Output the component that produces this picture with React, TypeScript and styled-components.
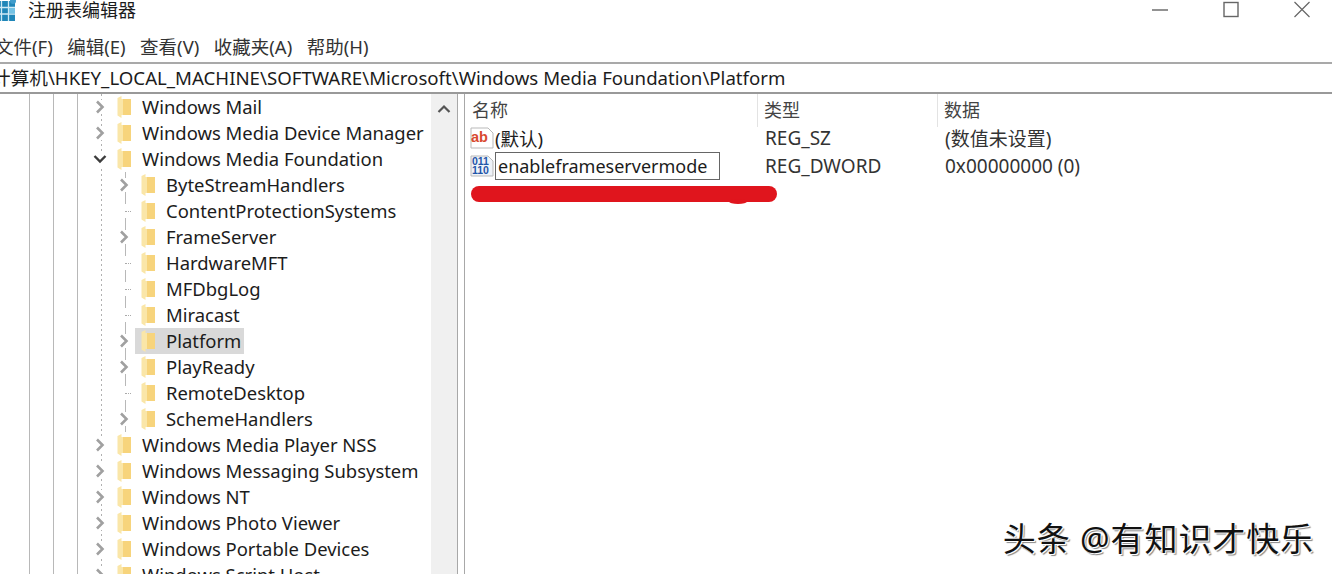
import React from "react";
import styled, { createGlobalStyle } from "styled-components";

interface TreeItem {
    label: string;
    depth: 0 | 1;
    arrow?: "closed" | "open";
    selected?: boolean;
}

const treeItems: TreeItem[] = [
    { label: "Windows Mail", depth: 0, arrow: "closed" },
    { label: "Windows Media Device Manager", depth: 0, arrow: "closed" },
    { label: "Windows Media Foundation", depth: 0, arrow: "open" },
    { label: "ByteStreamHandlers", depth: 1, arrow: "closed" },
    { label: "ContentProtectionSystems", depth: 1 },
    { label: "FrameServer", depth: 1, arrow: "closed" },
    { label: "HardwareMFT", depth: 1 },
    { label: "MFDbgLog", depth: 1 },
    { label: "Miracast", depth: 1 },
    { label: "Platform", depth: 1, arrow: "closed", selected: true },
    { label: "PlayReady", depth: 1, arrow: "closed" },
    { label: "RemoteDesktop", depth: 1 },
    { label: "SchemeHandlers", depth: 1, arrow: "closed" },
    { label: "Windows Media Player NSS", depth: 0, arrow: "closed" },
    { label: "Windows Messaging Subsystem", depth: 0, arrow: "closed" },
    { label: "Windows NT", depth: 0, arrow: "closed" },
    { label: "Windows Photo Viewer", depth: 0, arrow: "closed" },
    { label: "Windows Portable Devices", depth: 0, arrow: "closed" },
    { label: "Windows Script Host", depth: 0, arrow: "closed" },
];

const menus = ["文件(F)", "编辑(E)", "查看(V)", "收藏夹(A)", "帮助(H)"];

const RegeditIcon = () => (
    <svg width="26" height="24" viewBox="0 0 26 24">
        <rect x="0" y="3" width="20" height="20" fill="#1f86b8" />
        <path d="M0 9.5h20M0 16h20M6.5 3v20M13.5 3v20" stroke="#cfeaf5" strokeWidth="1.3" />
        <rect x="14" y="10" width="6" height="5.5" fill="#74c2e4" />
        <circle cx="18" cy="3" r="3" fill="#3f9ccb" />
    </svg>
);

const FolderIcon = () => (
    <svg width="15" height="24" viewBox="0 0 15 24">
        <path d="M0.5 3L4.5 1V4H14V20H4.5V23L0.5 20.5Z" fill="#fae6a8" />
        <path d="M6 4H14V20H6Z" fill="#f7d47c" />
    </svg>
);

const Chevron = ({ open }: { open: boolean }) => (
    <svg width="14" height="14" viewBox="0 0 14 14">
        {open ? (
            <path d="M1.5 4L7 9.5L12.5 4" fill="none" stroke="#3c3c3c" strokeWidth="2.4" />
        ) : (
            <path d="M4 1.5L9.5 7L4 12.5" fill="none" stroke="#a0a0a0" strokeWidth="2.6" />
        )}
    </svg>
);

const StringIcon = () => (
    <svg width="24" height="24" viewBox="0 0 24 24">
        <path d="M1 2H18L23 7V22H1Z" fill="#fff" stroke="#b9b9b9" />
        <text x="1" y="16" fontFamily="Liberation Sans, sans-serif" fontWeight="700" fontSize="14.5" fill="#d8492f">
            ab
        </text>
    </svg>
);

const BinaryIcon = () => (
    <svg width="24" height="24" viewBox="0 0 24 24">
        <path d="M1 2H18L23 7V22H1Z" fill="#eef2f8" stroke="#b9b9b9" />
        <text x="2" y="10.5" fontFamily="Liberation Sans, sans-serif" fontWeight="700" fontSize="10.5" fill="#1f55a8">
            011
        </text>
        <text x="2" y="20" fontFamily="Liberation Sans, sans-serif" fontWeight="700" fontSize="10.5" fill="#1f55a8">
            110
        </text>
    </svg>
);

const App: React.FC = () => (
    <Window>
        <GlobalStyle />
        <TitleBar>
            <TitleGroup>
                <RegeditIcon />
                <TitleText>注册表编辑器</TitleText>
            </TitleGroup>
            <Controls>
                <svg width="20" height="20" viewBox="0 0 20 20">
                    <path d="M2 10H18" stroke="#777" strokeWidth="1.6" />
                </svg>
                <svg width="20" height="20" viewBox="0 0 20 20">
                    <rect x="3" y="2.5" width="14" height="14" fill="none" stroke="#666" strokeWidth="1.4" />
                </svg>
                <svg width="20" height="20" viewBox="0 0 20 20">
                    <path d="M2.5 2L17.5 17M17.5 2L2.5 17" stroke="#666" strokeWidth="1.2" />
                </svg>
            </Controls>
        </TitleBar>
        <MenuBar>
            {menus.map((menu) => (
                <MenuItem key={menu}>{menu}</MenuItem>
            ))}
        </MenuBar>
        <AddressBar>
            <AddressText>计算机\HKEY_LOCAL_MACHINE\SOFTWARE\Microsoft\Windows Media Foundation\Platform</AddressText>
        </AddressBar>
        <Content>
            <TreePane>
                {treeItems.map((item) => (
                    <TreeRow key={item.label} $depth={item.depth}>
                        <ArrowSlot>
                            {item.arrow ? <Chevron open={item.arrow === "open"} /> : item.depth === 1 && <Dots />}
                        </ArrowSlot>
                        <TreeLabelWrap $selected={item.selected}>
                            <FolderIcon />
                            <TreeLabel>{item.label}</TreeLabel>
                        </TreeLabelWrap>
                    </TreeRow>
                ))}
            </TreePane>
            <ScrollBar>
                <svg width="14" height="10" viewBox="0 0 14 10">
                    <path d="M1.5 8L7 2.5L12.5 8" fill="none" stroke="#555" strokeWidth="2.2" />
                </svg>
            </ScrollBar>
            <Splitter />
            <ListPane>
                <HeaderRow>
                    <HeaderCell>名称</HeaderCell>
                    <HeaderCell $divided>类型</HeaderCell>
                    <HeaderCell $divided>数据</HeaderCell>
                </HeaderRow>
                <ValueRow>
                    <NameCell>
                        <StringIcon />
                        <span>(默认)</span>
                    </NameCell>
                    <PlainCell>REG_SZ</PlainCell>
                    <PlainCell>(数值未设置)</PlainCell>
                </ValueRow>
                <ValueRow>
                    <NameCell>
                        <BinaryIcon />
                        <EditBox>enableframeservermode</EditBox>
                    </NameCell>
                    <PlainCell>REG_DWORD</PlainCell>
                    <PlainCell>0x00000000 (0)</PlainCell>
                </ValueRow>
                <RedMark />
            </ListPane>
        </Content>
        <Watermark>头条 @有知识才快乐</Watermark>
    </Window>
);

export default App;

// Styled Components
const GlobalStyle = createGlobalStyle`
    html, body {
        margin: 0;
        padding: 0;
        height: 100%;
        overflow: hidden;
        background: #fff;
    }
`;

const Window = styled.div`
    position: relative;
    width: 1332px;
    height: 574px;
    overflow: hidden;
    background: #fff;
    color: #1c1c1c;
    font-family: "Noto Sans", "Noto Sans CJK SC", sans-serif;
    font-size: 18.5px;
    display: flex;
    flex-direction: column;
`;

const TitleBar = styled.div`
    height: 20px;
    display: flex;
    justify-content: space-between;
    align-items: center;
    flex-shrink: 0;
`;

const TitleGroup = styled.div`
    display: flex;
    align-items: center;
    gap: 7px;
    margin-left: -5px;
`;

const TitleText = styled.span`
    font-size: 18px;
    line-height: 20px;
`;

const Controls = styled.div`
    display: flex;
    gap: 51px;
    margin-right: 20px;
`;

const MenuBar = styled.div`
    height: 42px;
    display: flex;
    align-items: center;
    gap: 14.5px;
    margin-left: -5px;
    padding-top: 12px;
    box-sizing: border-box;
    flex-shrink: 0;
`;

const MenuItem = styled.span`
    font-size: 18.5px;
    line-height: 24px;
    color: #333;
`;

const AddressBar = styled.div`
    height: 32px;
    box-sizing: border-box;
    border-top: 2px solid #a9a9a9;
    border-bottom: 2px solid #999;
    padding-bottom: 4px;
    display: flex;
    align-items: center;
    overflow: hidden;
    flex-shrink: 0;
`;

const AddressText = styled.span`
    margin-left: -8px;
    font-size: 18.65px;
    white-space: nowrap;
`;

const Content = styled.div`
    flex: 1;
    display: flex;
    min-height: 0;
`;

const TreePane = styled.div`
    width: 431px;
    flex-shrink: 0;
    overflow: hidden;
    background-image:
        linear-gradient(#b8b8b8, #b8b8b8),
        linear-gradient(#b8b8b8, #b8b8b8),
        linear-gradient(#b8b8b8, #b8b8b8),
        repeating-linear-gradient(#b0b0b0 0 2px, transparent 2px 5px);
    background-size: 1px 100%;
    background-repeat: no-repeat;
    background-position: 29px 0, 53px 0, 77px 0, 101px 0;
`;

const TreeRow = styled.div<{ $depth: number }>`
    height: 26px;
    display: flex;
    align-items: center;
    padding-left: ${({ $depth }) => 93 + $depth * 24}px;
    background: ${({ $depth }) =>
        $depth === 1 ? "linear-gradient(#b8b8b8, #b8b8b8) 125px 0 / 1px 100% no-repeat" : "none"};
`;

const ArrowSlot = styled.span`
    width: 14px;
    height: 14px;
    display: flex;
    align-items: center;
    justify-content: center;
    background: #fff;
    flex-shrink: 0;
`;

const Dots = styled.span`
    width: 10px;
    margin-left: 8px;
    border-top: 1px dotted #aaa;
`;

const TreeLabelWrap = styled.span<{ $selected?: boolean }>`
    height: 26px;
    display: flex;
    align-items: center;
    gap: 10px;
    margin-left: 10px;
    padding-right: ${({ $selected }) => ($selected ? "3px" : "0")};
    box-shadow: ${({ $selected }) => ($selected ? "-6px 0 0 #d9d9d9" : "none")};
    background: ${({ $selected }) => ($selected ? "#d9d9d9" : "transparent")};
`;

const TreeLabel = styled.span`
    white-space: nowrap;
    font-size: 18.45px;
    line-height: 26px;
`;

const ScrollBar = styled.div`
    width: 27px;
    box-sizing: border-box;
    background: #f0f0f0;
    border-right: 1px solid #a8a8a8;
    padding-top: 10px;
    display: flex;
    justify-content: center;
    align-items: flex-start;
    flex-shrink: 0;
`;

const Splitter = styled.div`
    width: 7px;
    box-sizing: border-box;
    border-right: 1px solid #a8a8a8;
    flex-shrink: 0;
`;

const ListPane = styled.div`
    flex: 1;
    display: flex;
    flex-direction: column;
    padding-left: 5px;
`;

const columns = "287px 180px 1fr";

const HeaderRow = styled.div`
    display: grid;
    grid-template-columns: ${columns};
    height: 30px;
    align-items: stretch;
`;

const HeaderCell = styled.div<{ $divided?: boolean }>`
    padding-left: ${({ $divided }) => ($divided ? "6px" : "2px")};
    border-left: ${({ $divided }) => ($divided ? "1px solid #e3e3e3" : "none")};
    font-size: 18px;
    line-height: 33px;
    color: #444;
`;

const ValueRow = styled.div`
    display: grid;
    grid-template-columns: ${columns};
    height: 28px;
    align-items: center;
`;

const NameCell = styled.div`
    display: flex;
    align-items: center;
    gap: 1px;
`;

const PlainCell = styled.div`
    padding-left: 8px;
    font-size: 19px;
    white-space: nowrap;
    color: #333;
`;

const EditBox = styled.div`
    box-sizing: border-box;
    width: 225px;
    height: 28px;
    line-height: 26px;
    border: 1px solid #666;
    padding-left: 2px;
    font-size: 18px;
    background: #fff;
`;

const RedMark = styled.div`
    position: relative;
    width: 306px;
    height: 16px;
    margin-top: 6px;
    margin-left: 1px;
    border-radius: 8px;
    background: #e0151d;

    &::after {
        content: "";
        position: absolute;
        left: 258px;
        bottom: -2px;
        width: 18px;
        height: 5px;
        border-radius: 50%;
        background: #e0151d;
    }
`;

const Watermark = styled.div`
    position: absolute;
    right: 18px;
    bottom: 17px;
    font-size: 33px;
    line-height: 36px;
    letter-spacing: 0.9px;
    color: #111;
    text-shadow: 1px 1px 0 #fff, -1px -1px 0 #fff, 2px 2px 1px #888;
    white-space: nowrap;
`;
